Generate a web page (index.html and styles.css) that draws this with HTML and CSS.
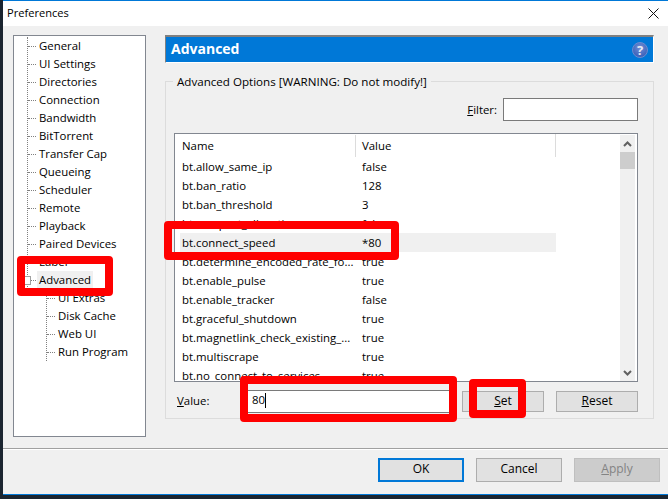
FILE: index.html
```html
<!DOCTYPE html>
<html lang="en">
<head>
<meta charset="utf-8">
<title>Preferences</title>
<link rel="stylesheet" href="styles.css">
</head>
<body>
<div class="window">
  <header class="titlebar">
    <span class="title">Preferences</span>
    <svg class="close" width="11" height="11" viewBox="0 0 11 11"><path d="M.5.5l10 10M10.5.5l-10 10" stroke="#111" fill="none"/></svg>
  </header>
  <div class="content">
    <nav class="tree">
      <ul class="top">
        <li><i class="tick"></i><span>General</span></li>
        <li><i class="tick"></i><span>UI Settings</span></li>
        <li><i class="tick"></i><span>Directories</span></li>
        <li><i class="tick"></i><span>Connection</span></li>
        <li><i class="tick"></i><span>Bandwidth</span></li>
        <li><i class="tick"></i><span>BitTorrent</span></li>
        <li><i class="tick"></i><span>Transfer Cap</span></li>
        <li><i class="tick"></i><span>Queueing</span></li>
        <li><i class="tick"></i><span>Scheduler</span></li>
        <li><i class="tick"></i><span>Remote</span></li>
        <li><i class="tick"></i><span>Playback</span></li>
        <li><i class="tick"></i><span>Paired Devices</span></li>
        <li><i class="tick"></i><span>Label</span></li>
        <li><i class="tick"><b class="expander"></b></i><span class="selected">Advanced</span></li>
      </ul>
      <ul class="sub">
        <li><i class="tick"></i><span>UI Extras</span></li>
        <li><i class="tick"></i><span>Disk Cache</span></li>
        <li><i class="tick"></i><span>Web UI</span></li>
        <li><i class="tick"></i><span>Run Program</span></li>
      </ul>
    </nav>
    <main class="pane">
      <div class="banner">
        <span>Advanced</span>
        <svg class="help" width="16" height="16" viewBox="0 0 16 16"><defs><radialGradient id="helpfill" cx="50%" cy="35%" r="70%"><stop offset="0" stop-color="#6f8fd6"/><stop offset="1" stop-color="#3559b4"/></radialGradient></defs><circle cx="8" cy="8" r="7.500" fill="url(#helpfill)" stroke="#6c8ccf"/><text x="8" y="12.500" text-anchor="middle" class="helpmark">?</text></svg>
      </div>
      <section class="group">
        <h2 class="legend">Advanced Options [WARNING: Do not modify!]</h2>
        <div class="filter">
          <label><u>F</u>ilter:</label>
          <input class="filter-input" type="text">
        </div>
        <div class="list">
          <div class="rows">
            <div class="row head"><span class="name">Name</span><span class="val">Value</span></div>
            <div class="row"><span class="name">bt.allow_same_ip</span><span class="val">false</span></div>
            <div class="row"><span class="name">bt.ban_ratio</span><span class="val">128</span></div>
            <div class="row"><span class="name">bt.ban_threshold</span><span class="val">3</span></div>
            <div class="row"><span class="name">bt.compact_allocation</span><span class="val">false</span></div>
            <div class="row hot"><span class="name">bt.connect_speed</span><span class="val">*80</span></div>
            <div class="row"><span class="name">bt.determine_encoded_rate_fo...</span><span class="val">true</span></div>
            <div class="row"><span class="name">bt.enable_pulse</span><span class="val">true</span></div>
            <div class="row"><span class="name">bt.enable_tracker</span><span class="val">false</span></div>
            <div class="row"><span class="name">bt.graceful_shutdown</span><span class="val">true</span></div>
            <div class="row"><span class="name">bt.magnetlink_check_existing_...</span><span class="val">true</span></div>
            <div class="row"><span class="name">bt.multiscrape</span><span class="val">true</span></div>
            <div class="row"><span class="name">bt.no_connect_to_services</span><span class="val">true</span></div>
          </div>
          <div class="scrollbar">
            <svg width="15" height="17" viewBox="0 0 15 17"><path d="M4 11l3.500-3.500L11 11" stroke="#606060" stroke-width="2" fill="none"/></svg>
            <div class="thumb"></div>
            <svg class="down" width="15" height="17" viewBox="0 0 15 17"><path d="M4 6l3.500 3.500L11 6" stroke="#606060" stroke-width="2" fill="none"/></svg>
          </div>
        </div>
        <div class="value-row">
          <label class="value-label"><u>V</u>alue:</label>
          <div class="value-input"><span class="value-text">80</span><i class="caret"></i></div>
          <button class="btn small"><u>S</u>et</button>
          <button class="btn small"><u>R</u>eset</button>
        </div>
      </section>
    </main>
  </div>
  <footer class="actions">
    <button class="btn big default">OK</button>
    <button class="btn big">Cancel</button>
    <button class="btn big disabled"><u>A</u>pply</button>
  </footer>
</div>
<div class="mark mark-advanced"></div>
<div class="mark mark-row"></div>
<div class="mark mark-value"></div>
<div class="mark mark-set"></div>
</body>
</html>
```
FILE: styles.css
```css
* { box-sizing: border-box; }
html, body { margin: 0; padding: 0; }
body {
  width: 668px; height: 499px; overflow: hidden; position: relative;
  background: #1b2530;
  font: 11.4px/18px "Open Sans", "Noto Sans", sans-serif;
  color: #000;
  padding: 0 0 4px 3px;
}
.window {
  height: 495px; background: #f0f0f0; border-top: 1px solid #0078d7;
  border-bottom: 1px solid #0078d7;
  display: flex; flex-direction: column;
}
.titlebar {
  height: 25px; background: #fff; flex: none;
  display: flex; align-items: center; justify-content: space-between;
  padding: 0 9px 1px 4px;
}
.title { font-size: 11.1px; }
.close { display: block; }
.content { display: flex; flex: none; height: 422px; padding: 9px 14px 0 10px; gap: 19px; }
.tree { width: 133px; height: 402px; background: #fff; border: 1px solid #828790; padding: 10px 0 0 13px; flex: none; }
ul { list-style: none; margin: 0; padding: 0; }
li { height: 18px; display: flex; align-items: center; }
.top { border-left: 1px dotted #808080; margin-top: 0; }
.top li:first-child { margin-top: -9px; }
.sub { border-left: 1px dotted #808080; margin-left: 19px; }
.sub li:last-child { margin-bottom: -9px; }
.tick { display: block; width: 8px; margin-right: 3px; border-top: 1px dotted #808080; flex: none; position: relative; }
.expander { position: absolute; left: -6px; top: -5px; width: 9px; height: 9px; background: #fff; border: 1px solid #a0a0a0; }
li span { white-space: nowrap; }
.selected { background: #f0f0f0; margin-left: -2px; padding: 0 2px; }
.pane { flex: 1; min-width: 0; display: flex; flex-direction: column; }
.banner {
  height: 28px; background: #0078d7; color: #fff; font-weight: 700; font-size: 14px;
  border-top: 2px solid #808080; border-left: 1px solid #808080;
  border-right: 1px solid #fff; border-bottom: 1px solid #fff;
  display: flex; align-items: center; justify-content: space-between; padding: 0 5px 2px 5px;
}
.help { display: block; margin-top: 3px; }
.helpmark { fill: #e6ebf5; font: 700 13px "Open Sans", sans-serif; }
.group {
  margin-top: 18px; height: 338px; border: 1px solid #dcdcdc; position: relative;
  padding: 16px 15px 0 8px;
}
.legend {
  position: absolute; left: 7px; top: -8px; margin: 0; padding: 0 4px; background: #f0f0f0;
  font: 400 11.6px/16px "Open Sans", "Noto Sans", sans-serif;
}
.filter { display: flex; justify-content: flex-end; align-items: center; gap: 6px; height: 23px; }
.filter-input { width: 135px; height: 23px; border: 1px solid #7a7a7a; background: #fff; padding: 0; margin: 0; display: block; }
.list {
  margin-top: 12px; height: 249px; background: #fff; border: 1px solid #828790;
  display: flex; overflow: hidden; padding-right: 2px;
}
.rows { flex: 1; min-width: 0; }
.row { display: flex; height: 19px; padding-left: 7px; line-height: 19px; width: 381px; white-space: nowrap; }
.row .name { width: 180px; flex: none; overflow: hidden; }
.head { height: 23px; line-height: 23px; background: linear-gradient(#dcdcdc,#dcdcdc) 180px 1px / 1px 22px no-repeat, #fff; width: 381px; border-right: 1px solid #dcdcdc; }
.hot { background: #f0f0f0; margin-left: 5px; padding-left: 2px; width: 376px; }
.scrollbar { width: 15px; flex: none; background: #f0f0f0; height: 247px; margin: 1px 0 0 auto; display: flex; flex-direction: column; }
.scrollbar svg { display: block; flex: none; }
.thumb { height: 17px; background: #cdcdcd; }
.scrollbar .down { margin-top: auto; }
.value-row { display: flex; align-items: center; margin-top: 8px; height: 23px; }
.value-label { width: 69px; flex: none; padding: 0 0 2px 3px; }
.value-input { width: 210px; height: 23px; background: #fff; border: 1px solid #7a7a7a; flex: none; display: flex; align-items: center; padding-left: 8px; }
.value-text { margin-bottom: 3px; }
.caret { display: block; width: 1px; height: 15px; background: #000; margin-bottom: 2px; }
.btn { font: 12px/18px "Open Sans", "Noto Sans", sans-serif; color: #000; background: #e1e1e1; border: 1px solid #adadad; padding: 0 0 2px; margin: 0; display: block; }
.small { width: 82px; height: 21px; margin-left: 12px; }
.value-input + .small { margin-left: 9px; }
.actions {
  flex: 1; border-top: 1px solid #a0a0a0; box-shadow: inset 0 1px 0 #fff;
  display: flex; justify-content: flex-end; gap: 12px; padding: 9px 8px 0 0;
}
.big { width: 86px; height: 24px; }
.default { border: 2px solid #0078d7; }
.disabled { background: #cccccc; color: #838383; border-color: #bfbfbf; }
.mark { position: absolute; border: 8px solid #ff0000; border-radius: 4px; }
.mark-advanced { left: 17px; top: 256px; width: 96px; height: 40px; }
.mark-row { left: 164px; top: 221px; width: 235px; height: 39px; }
.mark-value { left: 240px; top: 376px; width: 217px; height: 46px; }
.mark-set { left: 469px; top: 379px; width: 57px; height: 39px; }
```
